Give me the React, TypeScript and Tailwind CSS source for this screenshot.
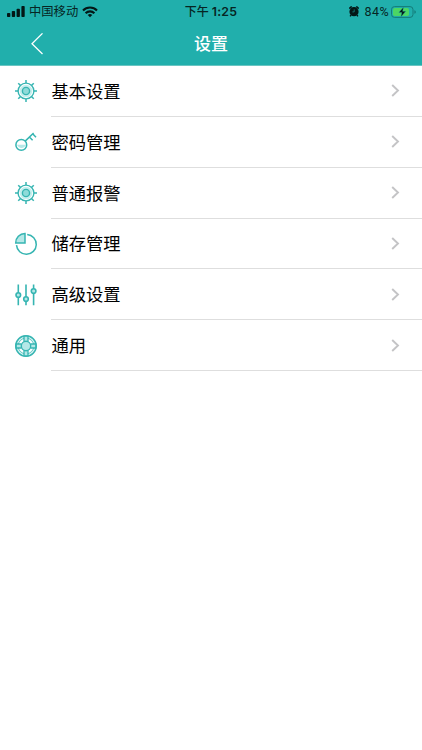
import type { ReactNode } from 'react';

const TEAL = '#36b5b2';
const PALE = '#b5e8e7';

function GearIcon() {
  return (
    <g>
      {[0, 45, 90, 135, 180, 225, 270, 315].map((a) => (
        <path key={a} d="M12 4V1" strokeWidth="1.5" transform={`rotate(${a} 12 12)`} />
      ))}
      <circle cx="12" cy="12" r="5" strokeWidth="2.6" stroke="#c6efee" />
      <circle cx="12" cy="12" r="7.9" strokeWidth="1.4" />
      <circle cx="12" cy="12" r="3.6" fill="#8edbd9" strokeWidth="1.4" />
    </g>
  );
}

function KeyIcon() {
  return (
    <g>
      <path d="M3 14.8h9a4.8 4.8 0 0 1-9 0Z" fill={PALE} stroke="none" />
      <circle cx="7.3" cy="14.9" r="5.4" />
      <path d="M11.2 11.1 19.6 3M18.7 3.7l3.3 3.6M15.4 6.9l3.2 3.3" />
    </g>
  );
}

function StorageIcon() {
  return (
    <g>
      <path d="M11 1.5A9.3 9.3 0 0 0 1.7 11H11Z" fill={PALE} />
      <path d="M13.2 2.5A9.9 9.9 0 1 1 2.5 13.1" />
    </g>
  );
}

function SlidersIcon() {
  return (
    <g>
      <path d="M4.3 1.5v20.7M12 1.5v20.7M19.6 1.5v20.7" strokeWidth="1.6" />
      <circle cx="4.3" cy="12" r="2.3" fill={PALE} strokeWidth="1.6" />
      <circle cx="12" cy="16.1" r="2.3" fill={PALE} strokeWidth="1.6" />
      <circle cx="19.6" cy="8.1" r="2.3" fill={PALE} strokeWidth="1.6" />
    </g>
  );
}

function WheelIcon() {
  return (
    <g>
      <circle cx="12" cy="12" r="9" strokeWidth="1.8" stroke="#d9f4f3" />
      <circle cx="12" cy="12" r="10.2" strokeWidth="1.6" />
      <circle cx="12" cy="12" r="7.9" strokeWidth="0.8" />
      {[0, 90, 180, 270].map((a) => (
        <path
          key={a}
          d="M10 7.4V2.2h4v5.2"
          fill={PALE}
          strokeWidth="1.3"
          transform={`rotate(${a} 12 12)`}
        />
      ))}
      <circle cx="12" cy="12" r="4.7" fill={PALE} strokeWidth="1.4" />
    </g>
  );
}

const items: { label: string; icon: ReactNode }[] = [
  { label: '基本设置', icon: <GearIcon /> },
  { label: '密码管理', icon: <KeyIcon /> },
  { label: '普通报警', icon: <GearIcon /> },
  { label: '储存管理', icon: <StorageIcon /> },
  { label: '高级设置', icon: <SlidersIcon /> },
  { label: '通用', icon: <WheelIcon /> },
];

function StatusBar() {
  return (
    <div className="grid h-[22px] grid-cols-3 items-center text-[12px] leading-[22px] text-[#062523]">
      <div className="flex items-center pl-[7px]">
        <svg width="18" height="11" viewBox="0 0 18 11" fill="#031716">
          <rect x="0" y="7" width="3.3" height="4" rx="0.8" />
          <rect x="4.8" y="5" width="3.3" height="6" rx="0.8" />
          <rect x="9.6" y="2.7" width="3.3" height="8.3" rx="0.8" />
          <rect x="14.4" y="0" width="3.3" height="11" rx="0.8" />
        </svg>
        <span className="ml-1 pt-px text-[12.3px]">中国移动</span>
        <svg className="ml-[4px]" width="16" height="12" viewBox="0 0 16 12" fill="none" stroke="#031716" strokeWidth="2.1">
          <path d="M1 4.4a10 10 0 0 1 14 0M3.6 7.2a6.2 6.2 0 0 1 8.8 0" />
          <path d="M8 11.3 5.7 9a3.3 3.3 0 0 1 4.6 0Z" fill="#031716" stroke="none" />
        </svg>
      </div>
      <div className="flex items-center justify-center whitespace-pre pt-px font-medium">
        <span className="text-[12px]">下午</span>
        <span className="ml-[3px] text-[12.3px] font-semibold tracking-[0.2px]">1:25</span>
      </div>
      <div className="flex items-center justify-end pr-[6px]">
        <svg width="10" height="11" viewBox="0 0 10 11">
          <path d="M.3 2.6 2.7.4M9.7 2.6 7.3.4M2 9l-.8 1.4M8 9l.8 1.4" stroke="#031716" strokeWidth="1.5" />
          <circle cx="5" cy="5.7" r="4.6" fill="#031716" />
          <path d="M5.2 3.4v2.5H3.4" fill="none" stroke="#178582" strokeWidth="0.8" />
        </svg>
        <span className="ml-[5px] pt-px font-['Roboto','Noto_Sans_CJK_SC',sans-serif] text-[12.5px] tracking-[0.45px]">84%</span>
        <svg className="ml-[2px]" width="25" height="12" viewBox="0 0 25 12">
          <rect x="0.5" y="0.6" width="21.5" height="10.8" rx="3" fill="none" stroke="#147b78" />
          <rect x="2" y="2.1" width="16" height="7.8" rx="1.7" fill="#4bd664" />
          <path d="M23.4 4.2v3.6c1-.4 1.4-1 1.4-1.8s-.4-1.4-1.4-1.8Z" fill="#147b78" />
          <path d="M12.6 1 7.8 6.6h3l-1 4.4 5-5.7h-3.1Z" fill="#031716" stroke="#21afac" strokeWidth="0.4" />
        </svg>
      </div>
    </div>
  );
}

export default function App() {
  return (
    <div className="min-h-[750px] w-full bg-white font-['Inter','Noto_Sans_CJK_SC',sans-serif]">
      <header className="h-[66px] border-b border-[#6ac5c2] bg-[#21afac]">
        <StatusBar />
        <div className="grid h-[43px] grid-cols-3 items-center">
          <button className="ml-[31px] flex w-6" aria-label="返回">
            <svg width="13" height="22" viewBox="0 0 13 22" fill="none" stroke="#fff" strokeWidth="1.3">
              <path d="M11.5.4 1 10.7 11.5 21" />
            </svg>
          </button>
          <h1 className="text-center text-[17px] font-medium leading-6 text-white">设置</h1>
        </div>
      </header>
      <ul>
        {items.map(({ label, icon }) => (
          <li key={label} className="flex h-[50.85px] items-stretch pl-[13.7px]">
            <svg
              className="mr-[13.3px] mt-[13.3px] shrink-0"
              width="24"
              height="24"
              viewBox="0 0 24 24"
              fill="none"
              stroke={TEAL}
              strokeWidth="1.5"
            >
              {icon}
            </svg>
            <div className="flex flex-1 items-center justify-between border-b border-[#dedede] pr-[22px]">
              <span className="pl-[0.5px] pt-[2px] text-[17.3px] leading-6 text-black">{label}</span>
              <svg width="9" height="13" viewBox="0 0 9 13" fill="none" stroke="#c4c4c6" strokeWidth="1.9">
                <path d="m1.2 1 5.8 5.5L1.2 12" />
              </svg>
            </div>
          </li>
        ))}
      </ul>
    </div>
  );
}
